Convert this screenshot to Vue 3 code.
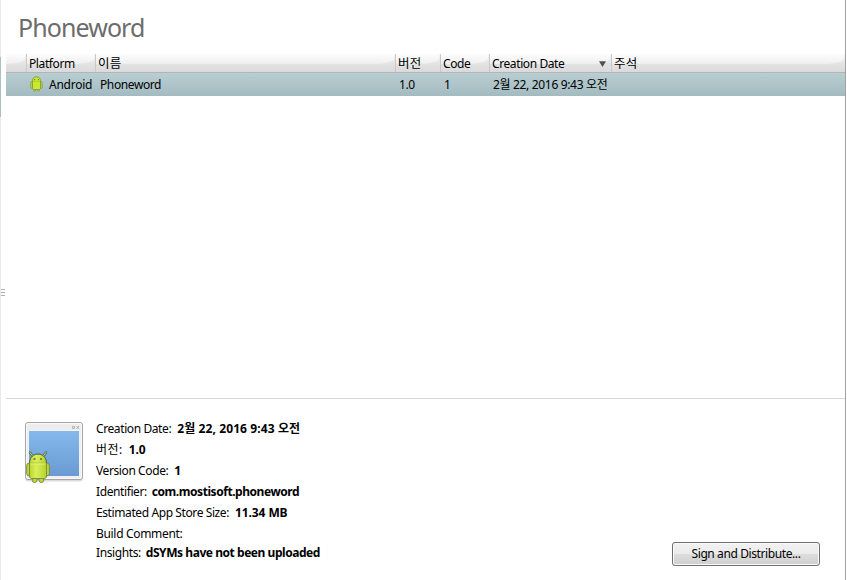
<script setup>
const columns = [
  { key: 'icon', label: '' },
  { key: 'platform', label: 'Platform' },
  { key: 'name', label: '이름' },
  { key: 'version', label: '버전' },
  { key: 'code', label: 'Code' },
  { key: 'date', label: 'Creation Date', sorted: true },
  { key: 'comment', label: '주석' }
]
const details = [
  { key: 'date', label: 'Creation Date:', value: '2월 22, 2016 9:43 오전' },
  { key: 'version', label: '버전:', value: '1.0' },
  { key: 'code', label: 'Version Code:', value: '1' },
  { key: 'identifier', label: 'Identifier:', value: 'com.mostisoft.phoneword' },
  { key: 'size', label: 'Estimated App Store Size:', value: '11.34 MB' },
  { key: 'comment', label: 'Build Comment:', value: '' },
  { key: 'insights', label: 'Insights:', value: 'dSYMs have not been uploaded' }
]
</script>

<template>
  <div class="window">
    <aside class="gutter">
      <div class="marker"></div>
      <div class="grip"><i></i><i></i><i></i></div>
    </aside>
    <main class="content">
      <h1>Phoneword</h1>
      <section class="archives">
        <div class="row head">
          <div v-for="c in columns" :key="c.key" class="cell" :class="'h-' + c.key">
            <span>{{ c.label }}</span>
            <svg v-if="c.sorted" class="sort" width="7" height="6" viewBox="0 0 7 6"><path d="M0 .3h7L3.5 6z" fill="#505050" /></svg>
          </div>
        </div>
        <div class="row item">
          <div class="platform">
            <svg class="robot" width="13" height="16" viewBox="0 0 13 16">
              <g fill="#c9ea2c" stroke="#84984c" stroke-width=".9">
                <rect x="3.5" y="11" width="2.2" height="4.2" rx="1" />
                <rect x="7.3" y="11" width="2.2" height="4.2" rx="1" />
                <rect x=".9" y="5.4" width="2.4" height="7" rx="1.1" />
                <rect x="9.7" y="5.4" width="2.4" height="7" rx="1.1" />
                <path d="M2.5 5.5C2.5 2 4 .8 6.5.8s4 1.2 4 4.7v6.9c0 .7-.4 1.1-1.1 1.1H3.6c-.7 0-1.1-.4-1.1-1.1z" />
              </g>
              <path d="M3 5.5h7" stroke="#a9c534" stroke-width=".7" />
              <path d="M4 3h1.2v1.2H4zM7.8 3H9v1.2H7.8z" fill="#7b9436" />
            </svg>
            <span>Android</span>
          </div>
          <div class="name">Phoneword</div>
          <div class="version">1.0</div>
          <div class="code">1</div>
          <div class="date">2월 22, 2016 9:43 오전</div>
        </div>
      </section>
      <section class="details">
        <svg class="app" width="60" height="64" viewBox="0 0 60 64">
          <defs>
            <linearGradient id="screen" x2="0" y2="1"><stop stop-color="#85b9ec" /><stop offset="1" stop-color="#699bd2" /></linearGradient>
            <linearGradient id="green" x2="1" y2="0"><stop stop-color="#bdd72c" /><stop offset=".4" stop-color="#daee5c" /><stop offset="1" stop-color="#b4d32a" /></linearGradient>
          </defs>
          <rect x="1" y="1.5" width="58" height="59" rx="3" fill="#ddd" />
          <rect x="1.5" y="1.5" width="57" height="57" rx="2.5" fill="#ededed" stroke="#a5a5a5" />
          <rect x="2.5" y="2.5" width="55" height="55" rx="1.5" fill="none" stroke="#fafafa" />
          <rect x="4.5" y="9.5" width="51" height="46" fill="#f7f7f7" />
          <rect x="5" y="10" width="50" height="45" fill="url(#screen)" />
          <path d="M48.5 5.5h2v2h-2zM52.5 5l2.5 3M55 5l-2.5 3" fill="none" stroke="#b3b3b3" />
          <g stroke="#7a8d4e" stroke-width="1" stroke-linejoin="round">
            <path d="M6 31.5l2.8 4M22 31.5l-2.8 4" stroke="#52697a" stroke-width="2.4" stroke-linecap="round" />
            <rect x="8.3" y="53" width="4.7" height="8.5" rx="2.2" fill="#bdd72c" />
            <rect x="15" y="53" width="4.7" height="8.5" rx="2.2" fill="#bdd72c" />
            <rect x="2.7" y="42" width="5" height="13" rx="2.5" fill="#bdd72c" />
            <rect x="20.3" y="42" width="5" height="13" rx="2.5" fill="#bdd72c" />
            <path d="M5.5 42c0-12 17-12 17 0v13c0 1.5-.7 2.5-2.2 2.5H7.7c-1.5 0-2.2-1-2.2-2.5z" fill="url(#green)" />
            <path d="M5.5 42c0-12 17-12 17 0" fill="none" stroke="#596f62" />
          </g>
          <path d="M6.5 42h15" stroke="#a4bc2c" stroke-width=".8" />
          <path d="M7 43h14" stroke="#e3f37b" />
          <path d="M9.5 37h2v2h-2zM16 37h2v2h-2z" fill="#7c8746" />
          <path d="M6 31.5l2.2 3M22 31.5l-2.2 3" stroke="#c1d83a" stroke-linecap="round" />
        </svg>
        <dl>
          <div v-for="d in details" :key="d.key" class="line" :class="'d-' + d.key">
            <dt>{{ d.label }}</dt>
            <dd>{{ d.value }}</dd>
          </div>
        </dl>
        <button type="button">Sign and Distribute...</button>
      </section>
    </main>
  </div>
</template>

<style>
body { margin: 0; background: #fff; }
</style>

<style scoped>
* { box-sizing: border-box; }
.window {
  display: flex;
  width: 847px;
  height: 580px;
  overflow: hidden;
  color: #000;
  font: 12px/20px "Noto Sans", "Noto Sans CJK KR", sans-serif;
  letter-spacing: -.4px;
  white-space: nowrap;
}
.gutter {
  width: 6px;
  flex: none;
  border-left: 1px solid #e8e8e8;
  padding-top: 57px;
}
.marker { width: 1px; height: 60px; margin-left: -1px; background: #a9c1c6; }
.grip { display: grid; gap: 2px; margin-top: 172px; }
.grip i { height: 1px; width: 4px; background: #b0b0b0; }
.content {
  width: 840px;
  flex: none;
  border-right: 1px solid #a0a0a0;
  display: flex;
  flex-direction: column;
}
h1 {
  margin: 0;
  height: 54px;
  padding: 7px 0 0 12px;
  font-size: 25px;
  line-height: 40px;
  font-weight: 400;
  letter-spacing: -.92px;
  color: #6c6c6c;
}
.archives { height: 344px; }
.row { display: grid; grid-template-columns: 20px 69px 300px 45px 49px 122px 1fr; }
.head { height: 19px; line-height: 18px; border-bottom: 1px solid #b4b4b4; }
.cell {
  display: flex;
  position: relative;
  height: 18px;
  align-items: center;
  justify-content: space-between;
  padding: 1px 5px 0 2px;
  background: linear-gradient(#f6f6f6, #e3e3e3 55%, #dadada);
  border-left: 1px solid #c8c8c8;
}
.cell:first-child { border-left: 0; }
.cell::before {
  content: "";
  position: absolute;
  inset: 0 1px 8px 0;
  background: linear-gradient(#fdfdfd, #eee);
  border-bottom-right-radius: 18px 6px;
}
.cell span, .sort { position: relative; }
.sort { margin-top: 1px; }
.h-name, .h-version, .h-comment { font-size: 12.5px; letter-spacing: .2px; }
.item {
  height: 23px;
  line-height: 23px;
  background: linear-gradient(#b9ced3, #a3bbc0);
}
.platform { grid-column: 1 / 3; display: flex; padding-left: 24px; letter-spacing: -.25px; }
.platform span { margin-left: 6px; }
.robot { margin-top: 3px; }
.name { padding-left: 5px; }
.version { padding-left: 4px; }
.code { padding-left: 4px; }
.date { padding-left: 4px; letter-spacing: -.33px; }
.details {
  flex: 1;
  display: flex;
  align-items: flex-start;
  border-top: 1px solid #d9d9d9;
  padding: 0 25px 14px 18px;
}
.app { margin-top: 22px; }
dl { margin: 19px 0 0 12px; flex: 1; }
.line { display: flex; gap: 6px; height: 21px; line-height: 22px; }
.d-insights { margin-top: -2px; }
dt { flex: none; }
dd { margin: 0; font-weight: 700; letter-spacing: -.45px; }
.d-date dd { letter-spacing: .1px; }
.d-version dt { letter-spacing: .5px; }
.d-version dd, .d-size dd { letter-spacing: -.1px; }
.d-identifier, .d-insights { gap: 5px; }
.d-comment dt { letter-spacing: -.32px; }
button {
  width: 148px;
  height: 24px;
  align-self: flex-end;
  padding: 0;
  font: inherit;
  line-height: 20px;
  letter-spacing: inherit;
  color: #000;
  border: 1px solid #707070;
  border-radius: 3px;
  box-shadow: inset 0 0 0 1px #fafafa;
  background: linear-gradient(#f2f2f2, #ebebeb 50%, #dddddd 50%, #cfcfcf);
}
</style>
